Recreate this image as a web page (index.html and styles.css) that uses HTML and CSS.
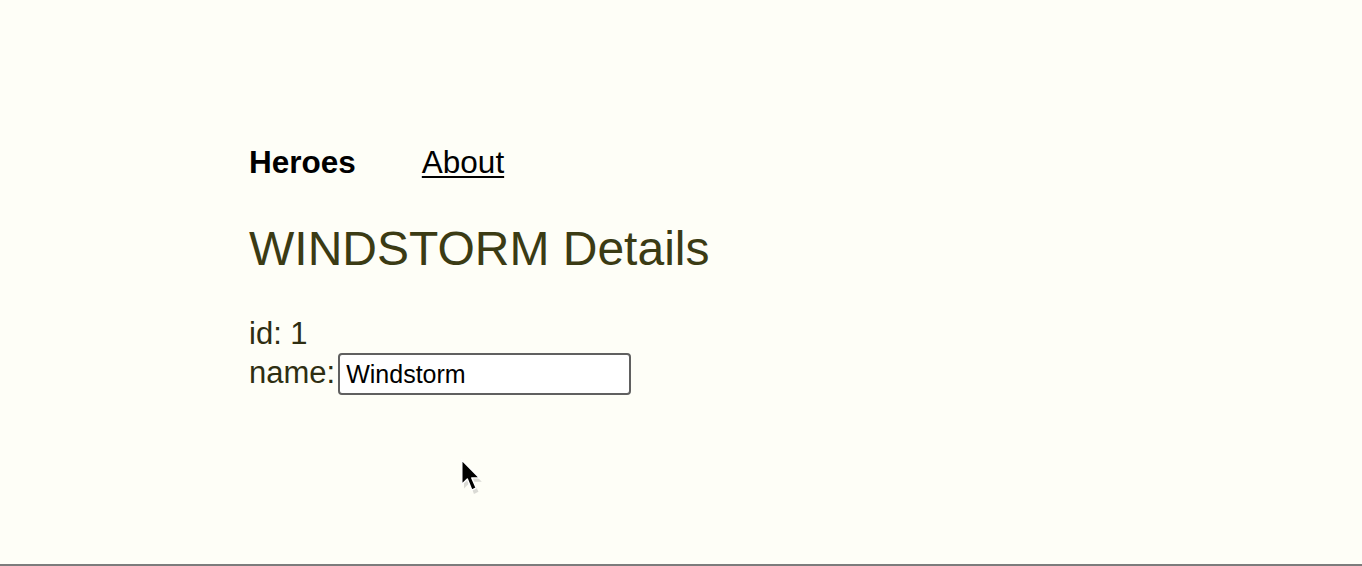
FILE: index.html
```html
<!DOCTYPE html>
<html lang="en">
<head>
<meta charset="utf-8">
<title>Tour of Heroes</title>
<link rel="stylesheet" href="styles.css">
</head>
<body>
<main class="app">
  <nav class="nav">
    <span class="nav-current">Heroes</span>
    <a class="nav-link" href="#">About</a>
  </nav>
  <h2 class="title">WINDSTORM Details</h2>
  <div class="field">id: 1</div>
  <div class="field field-row">
    <label class="label" for="hero-name">name:</label>
    <input class="name-input" id="hero-name" type="text" value="Windstorm">
  </div>
</main>
<svg class="cursor" width="30" height="40" viewBox="0 0 26 36" aria-hidden="true">
  <path d="M3,3 L3,25 L8,20 L12,30 L16,28 L12,19 L19,19 Z" fill="#888" opacity="0.3" transform="translate(1,1.5)"/>
  <path d="M2,1 L2,23 L7,18 L11,28 L15,26 L11,17 L18,17 Z" fill="#000" stroke="#fff" stroke-width="1.3" stroke-linejoin="round"/>
</svg>
</body>
</html>
```
FILE: styles.css
```css
html, body {
  margin: 0;
  padding: 0;
}
body {
  background: #fefef7;
  font-family: "Liberation Sans", Arial, sans-serif;
  min-height: 100vh;
  box-sizing: border-box;
  border-bottom: 2px solid #7c7c7c;
  position: relative;
  overflow: hidden;
}
.app {
  padding: 144px 0 0 249px;
}
.nav {
  display: flex;
  font-size: 31.5px;
  line-height: 36px;
}
.nav-current {
  font-weight: bold;
  color: #000;
}
.nav-link {
  margin-left: 66px;
  color: #000;
  text-decoration: underline;
  text-underline-offset: 3px;
  text-decoration-thickness: 2px;
}
.title {
  margin: 41px 0 0 0;
  font-size: 48px;
  line-height: 56px;
  font-weight: normal;
  color: #3b3b14;
}
.field {
  font-size: 31px;
  line-height: 36px;
  color: #2e2e12;
}
.title + .field {
  margin-top: 39px;
}
.field-row {
  display: flex;
  align-items: baseline;
  margin-top: 1px;
}
.name-input {
  margin-left: 3px;
  width: 293px;
  height: 42px;
  box-sizing: border-box;
  border: 2px solid #606060;
  border-radius: 4px;
  padding: 0 6px;
  font-family: "Liberation Sans", Arial, sans-serif;
  font-size: 25px;
  color: #000;
  background: #fff;
  outline: none;
}
.cursor {
  position: absolute;
  left: 459px;
  top: 459px;
}
```
